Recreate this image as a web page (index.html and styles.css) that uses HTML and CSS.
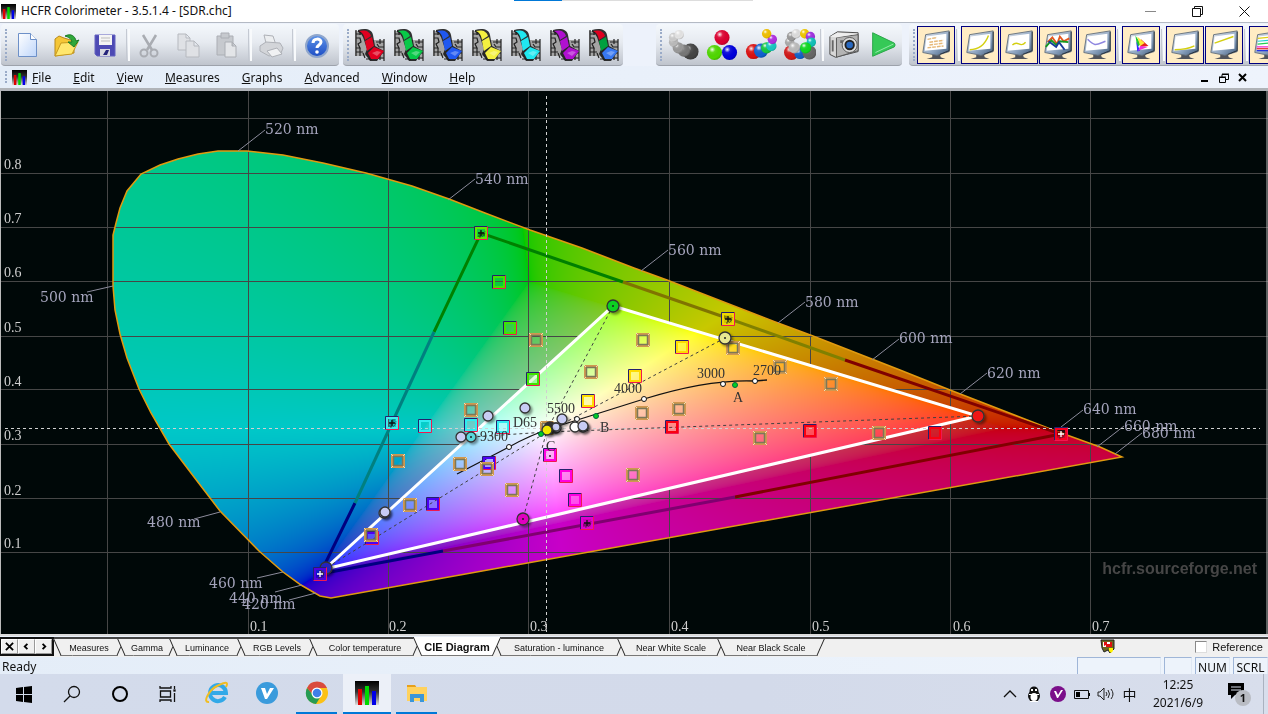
FILE: index.html
```html
<!DOCTYPE html>
<html lang="en">
<head>
<meta charset="utf-8">
<title>HCFR Colorimeter - 3.5.1.4 - [SDR.chc]</title>
<link rel="stylesheet" href="styles.css">
</head>
<body>
<svg class="defs" aria-hidden="true">
  <defs>
    <linearGradient id="logoBg" x2="0" y2="1"><stop stop-color="#000"/><stop offset=".45" stop-color="#333"/><stop offset="1" stop-color="#ddd"/></linearGradient>
    <linearGradient id="paper" x2="1" y2="1"><stop stop-color="#fff"/><stop offset="1" stop-color="#bfd6fa"/></linearGradient>
    <linearGradient id="helpFill" x2="0" y2="1"><stop stop-color="#5f95e8"/><stop offset="1" stop-color="#1c4cc4"/></linearGradient>
    <linearGradient id="frame" x2="1" y2="1"><stop stop-color="#e4e8ee"/><stop offset=".6" stop-color="#8fa6c2"/><stop offset="1" stop-color="#3c5878"/></linearGradient>
    <radialGradient id="shine" cx=".35" cy=".3" r=".8"><stop stop-color="#fff" stop-opacity=".95"/><stop offset=".25" stop-color="#fff" stop-opacity=".1"/><stop offset=".7" stop-color="#000" stop-opacity="0"/><stop offset="1" stop-color="#000" stop-opacity=".25"/></radialGradient>
    <symbol id="logo" viewBox="0 0 24 24"><path fill="url(#logoBg)" d="M0 0h24v24H0z"/><path fill="#e00000" d="M3 8h4v16H3z"/><path fill="#00d800" d="M10 5h4v19h-4z"/><path fill="#0000e8" d="M17 10h4v14h-4z"/></symbol>
    <symbol id="film" viewBox="0 0 32 32">
      <path fill="#a4a4a4" d="M1 2h8l4 9h17v19H18l-7-3H1z"/>
      <path fill="none" stroke="#222" stroke-width="1.2" d="M2 1v26M6 2v4M2 5h5M2 9h4l1 4-3 2 2 4H2M2 23h7M6 19v8M30 10v22M26 10v5M30 13h-8M30 18h-5l-2-3M30 24h-7M30 29h-8M26 25v6M12 30h6M9 24l2 5"/>
      <path d="M4 1c7-2 14-1 15 5l2 11 9 5-7 10h-7l-5-7 2-5-3-9C9 7 7 4 4 3z" fill="#111" fill-opacity=".85"/>
      <path class="fa" d="M5 2c5-1 10-1 12 5l-6 4C10 6 9 4 5 2z"/><path class="fb" d="m11 12 7-4 2 9-7 5z"/><path class="fc" d="m14 24 6-6 10 4-6 8h-7z"/>
      <path d="m18 24 5-2 4 1-4 4z" fill="#fff" opacity=".3"/>
    </symbol>
    <symbol id="monitor" viewBox="0 0 34 34">
      <path fill="#50545c" d="m13 27 8-1 1 4 5 2H7l6-2z"/><path fill="url(#frame)" stroke="#66727e" d="M6 6 31 2v22L18 28 3 25z"/>
      <path fill="#fff" d="M7 8 28 5v16L5 23z"/><path fill="none" stroke="#242e3a" d="M31 3v20l-10 4"/>
    </symbol>
  </defs>
</svg>
<div class="app">
  <header class="titlebar">
    <span class="loading"></span>
    <svg class="applogo"><use href="#logo"/></svg><h1>HCFR Colorimeter - 3.5.1.4 - [SDR.chc]</h1>
    <div class="winbuttons">
      <button aria-label="Minimize"><svg viewBox="0 0 11 11"><path stroke="#888" d="M0 5.500h11"/></svg></button>
      <button aria-label="Restore"><svg viewBox="0 0 11 11"><path d="M.5 2.500h8v8h-8zM2.500 2.500v-2h8v8h-2"/></svg></button>
      <button aria-label="Close"><svg viewBox="0 0 11 11"><path d="m.5.5 10 10m0-10-10 10"/></svg></button>
    </div>
  </header>

  <div class="toolbars">
    <div class="toolbar tb-file">
      <button aria-label="New"><svg viewBox="0 0 32 32"><path fill="url(#paper)" stroke="#6d90c8" d="M6.500 4.500h12l6 6v17h-18z"/><path fill="#fff" stroke="#6d90c8" d="M18.500 4.500v6h6"/></svg></button>
      <button aria-label="Open"><svg viewBox="0 0 32 32"><path fill="#f5c636" stroke="#b8891a" d="M4 27V10l4-3 5 2 10 3v12z"/><path fill="#ffe76e" stroke="#c79a20" d="m4 27 6-13 17-1-6 12z"/><path fill="#2fa83a" stroke="#1b7c28" d="M14 7c6-3 10 0 11 5l3-1-5 7-6-5 4 0c-1-4-4-5-7-6z"/></svg></button>
      <button aria-label="Save"><svg viewBox="0 0 32 32"><path fill="#4d4ab4" stroke="#6462c0" d="M5 6h20v21H7l-2-2z"/><path fill="#f4f4f4" d="M9 6h13v10H9z"/><path stroke="#bbb" d="M11 9h9M11 12h9"/><path fill="#d8d8e0" d="M10 20h10v7H10z"/><path fill="#25237a" d="M16 21h3l-2 5h-4z"/></svg></button>
      <i class="sep"></i>
      <button aria-label="Cut"><svg viewBox="0 0 32 32" fill="none" stroke="#a9acb2" stroke-width="2"><path d="m9 6 9 15M22 6l-9 15" stroke-width="2.500"/><circle cx="10" cy="24" r="3.500"/><circle cx="20" cy="24" r="3.500"/></svg></button>
      <button aria-label="Copy"><svg viewBox="0 0 32 32" fill="#dfe1e5" stroke="#b6b9bf"><path d="M5 5h8l4 4v12H5zM13 5v4h4"/><path d="M13 12h8l5 5v11H13zM21 12v5h5"/></svg></button>
      <button aria-label="Paste"><svg viewBox="0 0 32 32" fill="#c6c9ce" stroke="#abaeb4"><path d="M5 7h16v19H5z"/><path d="M9 4h8v5H9z"/><path fill="#e3e5e8" d="M13 13h7l4 4v11H13zM20 13v4h4"/></svg></button>
      <i class="sep"></i>
      <button aria-label="Print"><svg viewBox="0 0 32 32" fill="#d3d5d9" stroke="#aeb1b7"><path fill="#eceef0" d="m8 6 9 1 3 9-9 2z"/><path d="m4 17 6-4 14 1 3 5-2 5-12 3-9-5z"/><path fill="#f0f1f3" d="m11 22 10-3 5 6-10 3z"/></svg></button>
      <i class="sep"></i>
      <button aria-label="Help"><svg viewBox="0 0 32 32"><circle cx="17" cy="17" r="11" fill="url(#helpFill)" stroke="#8fa6cc" stroke-width="2"/><path fill="none" stroke="#fff" stroke-width="3" d="M13 14c0-5 8-5 8-1 0 3-4 3-4 6"/><circle cx="17" cy="23" r="1.800" fill="#fff"/></svg></button>
    </div>
    <div class="toolbar tb-film">
      <button aria-label="Red measure"><svg class="film red"><use href="#film"/></svg></button>
      <button aria-label="Green measure"><svg class="film green"><use href="#film"/></svg></button>
      <button aria-label="Blue measure"><svg class="film blue"><use href="#film"/></svg></button>
      <button aria-label="Yellow measure"><svg class="film yellow"><use href="#film"/></svg></button>
      <button aria-label="Cyan measure"><svg class="film cyan"><use href="#film"/></svg></button>
      <button aria-label="Magenta measure"><svg class="film magenta"><use href="#film"/></svg></button>
      <button aria-label="Saturation measure"><svg class="film rgb"><use href="#film"/></svg></button>
    </div>
    <div class="toolbar tb-measure">
      <button aria-label="Gray scale"><svg viewBox="0 0 34 34" data-balls="25,24,8.5,#444 18,23,6.500,#777 12,20,6,#999 7,14,5,#bbb 7,9,5,#ccc 13,6,5,#e4e4e4"></svg></button>
      <button aria-label="Primaries"><svg viewBox="0 0 34 34" data-balls="17,9,8,#dc0030 9,25,8,#50d800 25,25,8,#0000dc"></svg></button>
      <button aria-label="Saturation"><svg viewBox="0 0 34 34" data-balls="9,24,8,#dc1010 17,23,7.500,#1060d0 23,20,6,#18c840 28,18,5.500,#18c8c0 29,11,5,#b030e0 23,5,5,#f0c000"></svg></button>
      <button aria-label="Color checker"><svg viewBox="0 0 34 34" data-balls="8,25,8,#d01818 17,26,6,#1060c8 27,25,7.500,#666 6,14,5,#aaa 8,8,5,#999 13,5,5,#ddd 22,5,5,#f0c800 28,8,5,#a030e0 29,14,5,#10c0b8 23,20,6,#10d820 11,20,6,#bbb"></svg></button>
      <i class="sep"></i>
      <button aria-label="Camera"><svg viewBox="0 0 34 34"><path fill="#d7d7d7" stroke="#444" d="m2 8 8-5 22 1v20L8 30l-6-3z"/><path fill="#b4b4b4" stroke="#555" d="M9 9 32 6v17L9 30z"/><path fill="#eee" d="m2 8 8-4 22 1-23 4z"/><circle cx="23" cy="17" r="8" fill="#ddd" stroke="#555"/><circle cx="23" cy="17" r="5.500" fill="#222"/><circle cx="23" cy="17" r="3.500" fill="#2868c0"/><path fill="#666" d="M13 12h3v3h-3zM4 12h2v12H4z"/></svg></button>
      <button aria-label="Start"><svg viewBox="0 0 34 34"><path fill="#35c957" stroke="#28a346" d="m6 4 23 11c1 1 1 3 0 4L6 29z"/><path fill="none" stroke="#9ceab0" d="m9 25 19-9"/></svg></button>
    </div>
    <div class="toolbar tb-views">
      <button class="on" aria-label="Measures"><svg viewBox="0 0 34 34"><use href="#monitor"/><path fill="none" stroke="#e6b878" stroke-width="1.500" stroke-dasharray="4 1" d="m8 11 10-2M10 14l15-2M10 17l15-2M8 20l17-2"/></svg></button>
      <i class="sep"></i>
      <button class="on" aria-label="Luminance"><svg viewBox="0 0 34 34"><use href="#monitor"/><path fill="none" stroke="#d4cf10" stroke-width="1.500" d="M6 22c11 0 17-7 20-15"/></svg></button>
      <button class="on" aria-label="Gamma"><svg viewBox="0 0 34 34"><use href="#monitor"/><path fill="none" stroke="#d4cf10" stroke-width="1.500" d="M10 17c6-6 8 4 14-3"/></svg></button>
      <button class="on" aria-label="RGB levels"><svg viewBox="0 0 34 34"><use href="#monitor"/><g fill="none" stroke-width="2"><path stroke="#e35720" d="m6 14 5-5 5 7 3-8 4 5 6-3"/><path stroke="#169820" d="m4 19 6-7 5 5 4-4 9 1"/><path stroke="#173a9a" d="m7 13 8 6 3-5 6 8"/></g></svg></button>
      <button class="on" aria-label="Color temperature"><svg viewBox="0 0 34 34"><use href="#monitor"/><path fill="none" stroke="#8e86e0" stroke-width="1.500" d="M7 11c8 8 9 6 19 2"/></svg></button>
      <i class="sep"></i>
      <button class="on" aria-label="CIE diagram"><svg viewBox="0 0 34 34"><use href="#monitor"/><path fill="#20c830" d="m11 7 6 9-4 3z"/><path fill="#e82020" d="m17 11 8 7-9 1z"/><path fill="#ffe838" d="m13 8 8 7-5 3z"/><path fill="#3030ff" d="m12 13 4 10-3 1z"/><path fill="#f030e0" d="m16 18 8 1-10 4z"/></svg></button>
      <i class="sep"></i>
      <button class="on" aria-label="Near black"><svg viewBox="0 0 34 34"><use href="#monitor"/><path fill="none" stroke="#d4cf10" stroke-width="1.500" d="M6 22c11 0 17-2 21-4"/></svg></button>
      <button class="on" aria-label="Near white"><svg viewBox="0 0 34 34"><use href="#monitor"/><path fill="none" stroke="#d4cf10" stroke-width="1.500" d="m7 15 20-7"/></svg></button>
      <i class="sep"></i>
      <button class="on" aria-label="Saturation shift"><svg viewBox="0 0 34 34"><use href="#monitor"/><g fill="none" stroke-width="1.300"><path stroke="#e0d010" d="m6 10 22-2"/><path stroke="#20d0d0" d="m6 13 22-2"/><path stroke="#20d050" d="m6 16 22-2"/><path stroke="#f020d0" d="M5 19h22"/><path stroke="#e02020" d="M5 21h22"/><path stroke="#2030e0" d="M5 23h20"/></g></svg></button>
    </div>
  </div>

  <nav class="menubar">
    <svg class="doclogo"><use href="#logo"/></svg>
    <button><u>F</u>ile</button><button><u>E</u>dit</button><button><u>V</u>iew</button><button><u>M</u>easures</button><button><u>G</u>raphs</button><button><u>A</u>dvanced</button><button><u>W</u>indow</button><button><u>H</u>elp</button>
    <div class="docbuttons">
      <button aria-label="Minimize document"><svg viewBox="0 0 10 10"><path stroke-width="2" d="M1 8h7"/></svg></button>
      <button aria-label="Restore document"><svg viewBox="0 0 10 10"><path d="M0 4.500h6.500v5H.5v-5M3 4V1.500h6.500v5H7M3 1h7M0 4h7"/></svg></button>
      <button aria-label="Close document"><svg viewBox="0 0 10 10"><path stroke-width="2" d="m1 1 7 7m0-7L1 8"/></svg></button>
    </div>
  </nav>

  <main class="chart">
    <canvas id="gamut" width="1268" height="543"></canvas>
    <svg id="plot" viewBox="0 91 1268 543" preserveAspectRatio="none" role="img" aria-label="CIE diagram">
      <defs>
        <mask id="outside"><path fill="#fff" d="M0 91h1268v543H0z"/><path fill="#000" d="m613 306 365 110-653 153z"/></mask>
        <filter id="drop" x="-50%" y="-50%" width="200%" height="200%"><feDropShadow dx="2" dy="2" stdDeviation="1" flood-opacity=".4"/></filter>
      </defs>
      <path class="grid" mask="url(#outside)" d="M107.500 91v543M248.500 91v543M388.500 91v543M528.500 91v543M669.500 91v543M810.500 91v543M950.500 91v543M1090.500 91v543M0 118.500h1268M0 173.500h1268M0 227.500h1268M0 281.500h1268M0 336.500h1268M0 389.500h1268M0 444.500h1268M0 498.500h1268M0 552.500h1268"/>
      <polygon id="locus" class="locus" points="331,598 320,596 301,585 283,572 259,551 220,511 194,477 169,444 151,413 139,389 127,358 120,334 115,310 113,286 113,265 113,235 116,223 120,208 127,191 141,174 160,165 178,159 198,154 218,151 247,151 283,155 323,163 366,173 412,186 449,199 485,213 530,230 582,248 634,268 667,280 778,323 813,336 900,370 950,390 1053,430 1100,447 1122,457"/>
      <g class="leader"><path d="m238 151 27-21M448 200l27-21M641 271l27-21M778 323l27-21M872 360l27-21M960 394l27-21M1061 427l22-17M1097 447l27-21M1115 454l27-21M113 286l-26 6M220 512l-26 7M283 572l-26 6M302 585l-27 7M316 593l-27 7"/></g>
      <g class="wave"><text x="265" y="134">520 nm</text><text x="475" y="184">540 nm</text><text x="668" y="255">560 nm</text><text x="805" y="307">580 nm</text><text x="899" y="343">600 nm</text><text x="987" y="378">620 nm</text><text x="1083" y="414">640 nm</text><text x="1124" y="431">660 nm</text><text x="1142" y="438">680 nm</text><text x="40" y="302">500 nm</text><text x="147" y="527">480 nm</text><text x="209" y="588">460 nm</text><text x="229" y="603">440 nm</text><text x="242" y="609">420 nm</text></g>
      <g class="axis"><text x="4" y="169">0.8</text><text x="4" y="223">0.7</text><text x="4" y="277">0.6</text><text x="4" y="332">0.5</text><text x="4" y="386">0.4</text><text x="4" y="440">0.3</text><text x="4" y="495">0.2</text><text x="4" y="548">0.1</text><text x="250" y="631">0.1</text><text x="389" y="631">0.2</text><text x="530" y="631">0.3</text><text x="671" y="631">0.4</text><text x="812" y="631">0.5</text><text x="953" y="631">0.6</text><text x="1092" y="631">0.7</text></g>
      <text class="mark" x="1257" y="574" text-anchor="end">hcfr.sourceforge.net</text>
      <g class="ref"><path stroke="#008000" d="m434 332 47-99 142 49"/><path stroke="#807400" d="m623 282 104 36"/><path stroke="#808000" d="m727 318 118 42"/><path stroke="#800000" d="m845 360 216 74-326 63"/><path stroke="#800070" d="m735 497-292 54"/><path stroke="#000080" d="m443 551-123 23 35-71"/><path stroke="#008080" d="m355 503 79-171"/></g>
      <path class="gamutline" d="m613 306 365 110-653 153z"/>
      <path class="cross" d="M546.500 96v536M5 428.500h1255"/>
      <path class="links" d="m613 306-66 124-24 89M725 338 547 432 326 568M978 416l-431 16-76 5"/>
      <path class="planck" d="M457 474 509 447Q530 435 555 427T644 399T755 381L767 380"/>
      <g id="markers"></g>
      <g class="temps"><text x="513" y="427">D65</text><text x="480" y="441">9300</text><text x="547" y="413">5500</text><text x="614" y="393">4000</text><text x="697" y="378">3000</text><text x="753" y="375">2700</text><text x="733" y="402">A</text><text x="600" y="432">B</text><text x="546" y="451">C</text></g>
      <path class="edge" d="M.5 91v543M1267 91v543"/>
    </svg>
  </main>

  <div class="tabrow">
    <div class="tabnav">
      <button aria-label="Close view"><svg viewBox="0 0 10 10"><path d="m1 1 8 8m0-8L1 9"/></svg></button>
      <button aria-label="Previous"><svg viewBox="0 0 10 10"><path d="M6 2 3 5l3 3"/></svg></button>
      <button aria-label="Next"><svg viewBox="0 0 10 10"><path d="m4 2 3 3-3 3"/></svg></button>
    </div>
    <div class="tabs" role="tablist">
      <button role="tab" class="w64"><span>Measures</span></button><button role="tab" class="w52"><span>Gamma</span></button><button role="tab" class="w68"><span>Luminance</span></button><button role="tab" class="w72"><span>RGB Levels</span></button><button role="tab" class="w104"><span>Color temperature</span></button><button role="tab" class="w80 active" aria-selected="true"><span>CIE Diagram</span></button><button role="tab" class="w124"><span>Saturation - luminance</span></button><button role="tab" class="w100"><span>Near White Scale</span></button><button role="tab" class="w100"><span>Near Black Scale</span></button>
    </div>
    <svg class="sensor" viewBox="0 0 15 15"><path fill="#6d6820" stroke="#222" d="M1 1h13v9l-4 4-2-3-4 2-2-4z"/><path fill="#fff" d="M3 3h8v5H3z"/><path fill="#e01010" d="M4 3h3v2h3V3h2v5H6V6L4 7z"/><path fill="#fff200" d="M9 9h4v3l-2 2-2-2z"/></svg>
    <label class="reference"><input type="checkbox">Reference</label>
  </div>

  <footer class="status"><span class="ready">Ready</span><span class="pane p84"></span><span class="pane p28"></span><span class="pane p35">NUM</span><span class="pane p35">SCRL</span></footer>

  <div class="taskbar">
    <div class="sys">
      <button aria-label="Start menu"><svg viewBox="0 0 24 24"><path d="m4 6 7-1v7H4zM12 5l8-1v8h-8zM4 13h7v7l-7-1zM12 13h8v8l-8-1z"/></svg></button>
      <button aria-label="Search"><svg viewBox="0 0 24 24" fill="none" stroke="#111" stroke-width="1.300"><circle cx="14" cy="10" r="5.500"/><path d="m10 14-6 6"/></svg></button>
      <button aria-label="Cortana"><svg viewBox="0 0 24 24"><circle cx="12" cy="12" r="7" fill="none" stroke="#000" stroke-width="2"/></svg></button>
      <button aria-label="Task view"><svg viewBox="0 0 24 24" fill="none" stroke="#111" stroke-width="1.300"><path d="M4 4v2h11V4M4.500 9h10v6h-10zM4 20v-2h11v2M18.500 4v3m0 4v9"/><path fill="#111" d="M18 8h1v1h-1z"/></svg></button>
    </div>
    <div class="apps">
      <button aria-label="Internet Explorer"><svg viewBox="0 0 24 24"><path fill="none" stroke="#32a9e8" stroke-width="4" d="M20 16a8 8 0 1 1 1-4H7"/><path fill="none" stroke="#f0bd22" stroke-width="2" d="M4 21C-3 22 4 9 12 5s12-5 9 1"/></svg></button>
      <button aria-label="Vivaldi mail"><svg viewBox="0 0 24 24"><circle cx="12" cy="12" r="11" fill="#3a9bdc"/><path fill="#fff" d="M6 7h4l2 6 3-6h4l-7 11h-2z"/></svg></button>
      <button class="open" aria-label="Chrome"><svg viewBox="0 0 24 24"><circle cx="12" cy="12" r="11" fill="#fbc116"/><path fill="#d94a3d" d="M2 7a11 11 0 0 1 20 0H12a5 5 0 0 0-4 7z"/><path fill="#269b54" d="M2 7a11 11 0 0 0 9 16l5-8a5 5 0 0 1-8-1z"/><circle cx="12" cy="12" r="5.500" fill="#fff"/><circle cx="12" cy="12" r="4.300" fill="#3f7fe8"/></svg></button>
      <button class="open current" aria-label="HCFR"><svg><use href="#logo"/></svg></button>
      <button class="open" aria-label="File Explorer"><svg viewBox="0 0 24 24"><path fill="#e7a01b" d="M2 4h8l2 3H2z"/><path fill="#ffd25e" d="M2 6h20v14H2z"/><path fill="#3b96d8" d="M5 21v-8h14v8h-4v-4H9v4z"/></svg></button>
    </div>
    <div class="tray">
      <svg viewBox="0 0 24 24" fill="none" stroke="#111" stroke-width="1.300"><path d="m6 15 6-6 6 6"/></svg>
      <svg viewBox="0 0 24 24"><ellipse cx="12" cy="14" rx="6" ry="6" fill="#111"/><circle cx="12" cy="9" r="4.500" fill="#111"/><ellipse cx="12" cy="15" rx="3.500" ry="4" fill="#fff"/><path fill="#fff" d="M9 7h2v2H9zm4 0h2v2h-2zM8 19h8v1H8zM7 12h10v1H7z"/></svg>
      <svg viewBox="0 0 24 24"><circle cx="12" cy="12" r="8" fill="#7b0f8a"/><path fill="#fff" d="M8 9h2l2 4 3-5h2l-5 8h-1z"/></svg>
      <svg viewBox="0 0 24 24"><path fill="none" stroke="#111" d="M4.500 8.500h14v8h-14z"/><path d="M6 10h4v5H6zM19 11h1v3h-1z"/></svg>
      <svg viewBox="0 0 24 24" fill="none" stroke="#222"><path d="M4 10h2l4-4v12l-4-4H4zM12 10q2 2 0 4M14 8q3 4 0 8M17 7q4 5 0 10"/></svg>
      <span class="ime">中</span>
    </div>
    <time class="clock"><span>12:25</span><span>2021/6/9</span></time>
    <button class="notice" aria-label="Notifications"><svg viewBox="0 0 26 26"><path d="M2 2h16v12H9l-4 4v-4H2z"/><path stroke="#d5dcea" d="M5 6h10M5 9h10"/><circle cx="17" cy="17" r="8" fill="#b9bcc3"/></svg><b>1</b></button>
    <span class="desktop"></span>
  </div>
</div>
<script src="diagram.js"></script>
</body>
</html>
```

FILE: styles.css
```css
* { box-sizing: border-box; }
html, body { height: 100%; }
body { margin: 0; overflow: hidden; font-family: "Open Sans", "Noto Sans", sans-serif; color: #111; background: #e9f0fa; }
button { border: 0; background: none; padding: 0; margin: 0; font: inherit; color: inherit; display: flex; align-items: center; justify-content: center; }
svg { display: block; }
.defs { position: absolute; width: 0; height: 0; }
.app { display: flex; flex-direction: column; height: 100vh; }

.titlebar { position: relative; flex: none; height: 23px; display: flex; align-items: center; background: #fff; padding-left: 1px; border-bottom: 1px solid #b4bac4; }
.titlebar h1 { margin: 0 0 0 5px; font-family: "Noto Sans", sans-serif; font-size: 12px; line-height: 20px; font-weight: 400; flex: 1; }
.applogo { width: 15px; height: 15px; }
.loading { position: absolute; top: 0; left: 514px; width: 239px; height: 1px; background: linear-gradient(90deg, #0078d7 48px, #ddd 48px); }
.winbuttons { display: flex; }
.winbuttons button { width: 47px; height: 22px; }
.winbuttons svg { width: 11px; height: 11px; fill: none; stroke: #111; }

.toolbars { flex: none; display: flex; height: 43px; padding-top: 1px; background: #edf2fb; overflow: hidden; }
.toolbar { flex: none; display: flex; gap: 1px; align-items: center; height: 42px; position: relative; border-radius: 4px; border-bottom: 1px solid #9da2ab; background: linear-gradient(#f4f8fc, #e6eaf0 45%, #bfc4cd); }
.toolbar::before { content: ""; position: absolute; left: 4px; top: 5px; height: 32px; border-left: 2px dotted #9aabc8; }
.toolbar button { width: 38px; height: 38px; flex: none; }
.toolbar svg { width: 32px; height: 32px; }
.tb-file { margin-left: 1px; padding: 0 4px 0 8px; }
.tb-film { margin-left: 4px; padding-left: 8px; }
.tb-measure { margin-left: 33px; padding-left: 8px; }
.tb-views { margin-left: 7px; padding-left: 8px; }
.sep { width: 4px; height: 32px; border-left: 1px solid #c4c9d2; border-right: 2px solid #f8fafc; flex: none; }
.toolbar .on { background: #ffecc4; border: 1px solid #000080; }
.fa { fill: var(--a); } .fb { fill: var(--b, var(--a)); } .fc { fill: var(--c, var(--a)); }
.red { --a: #e00020; } .green { --a: #08c848; } .blue { --a: #2058f0; } .yellow { --a: #f4f040; }
.cyan { --a: #20e8f0; } .magenta { --a: #b010d0; } .rgb { --a: #e00020; --b: #00a040; --c: #3878f0; }

.menubar { flex: none; display: flex; align-items: center; height: 25px; padding: 1px 20px 0 12px; background: linear-gradient(90deg, #e4edf8, #eef3fc); border-bottom: 3px solid #b0b3b8; font-family: "Noto Sans", sans-serif; font-size: 12px; position: relative; }
.menubar::before { content: ""; position: absolute; left: 5px; top: 5px; height: 12px; border-left: 2px dotted #9aabc8; }
.doclogo { width: 15px; height: 15px; margin-right: 5px; }
.menubar > button { margin-right: 22px; line-height: 18px; white-space: pre; }
.docbuttons { margin-left: auto; display: flex; gap: 9px; }
.docbuttons svg { width: 10px; height: 10px; fill: none; stroke: #000; }

.chart { flex: 1; min-height: 0; display: grid; background: #000808; overflow: hidden; }
.chart > * { grid-area: 1 / 1; width: 100%; height: 100%; min-height: 0; }
.edge { stroke: #bbb; }
.grid { stroke: #464646; fill: none; stroke-width: 1; }
.locus { fill: none; stroke: #e09a10; stroke-width: 1.5; }
.leader { fill: none; stroke: #8c8c9c; }
.wave { font-family: "DejaVu Serif", serif; font-size: 14px; fill: #a4a4bc; }
.axis { font-family: "Liberation Serif", serif; font-size: 14px; fill: #d0d0d0; }
.mark { font-family: "Liberation Sans", sans-serif; font-size: 16px; font-weight: 700; fill: #464646; }
.ref { fill: none; stroke-width: 3; }
.gamutline { fill: none; stroke: #fff; stroke-width: 3; }
.cross { stroke: #d0d0d0; stroke-dasharray: 3 3; fill: none; }
.links { stroke: #404040; stroke-dasharray: 3 3; fill: none; }
.planck { stroke: #111; stroke-width: 1.3; fill: none; }
.temps { font-family: "Liberation Serif", serif; font-size: 14px; fill: #333; }

.tabrow { flex: none; display: flex; align-items: stretch; height: 23px; background: linear-gradient(#444 2px, #f0f0f0 2px) 0 1px no-repeat; border-top: 2px solid #dcdcdc; font-family: "Liberation Sans", sans-serif; font-size: 9px; }
.tabnav { display: flex; border: 1px solid #111; border-width: 2px 2px 2px 1px; height: 19px; margin-top: 1px; }
.tabnav button { width: 17px; border: 1px solid #999; border-top-color: #fff; border-left-color: #fff; }
.tabnav svg { width: 9px; height: 9px; fill: none; stroke: #000; stroke-width: 2; }
.tabs { display: flex; flex: 1; padding-left: 3px; margin-top: 3px; height: 17px; }
.tabs button { position: relative; z-index: 0; }
.tabs button span { position: relative; z-index: 1; white-space: nowrap; }
.tabs button::before, .tabs button::after { content: ""; position: absolute; top: 0; bottom: 0; border-bottom: 1px solid #777; background: #f0f0f0; }
.tabs button::before { left: 0; right: 30%; border-left: 1px solid #222; transform: skewX(24deg); }
.tabs button::after { right: 0; left: 30%; border-right: 1px solid #222; transform: skewX(-24deg); }
.tabs .active { font-weight: 700; font-size: 11px; z-index: 2; margin-top: -2px; }
.tabs .active::before, .tabs .active::after { background: #fff; }
.w64 { width: 64px; } .w52 { width: 52px; } .w68 { width: 68px; } .w72 { width: 72px; } .w104 { width: 104px; }
.w80 { width: 80px; } .w124 { width: 124px; } .w100 { width: 100px; }
.sensor { width: 15px; height: 15px; margin: 3px 80px 0 0; }
.reference { display: flex; align-items: center; gap: 5px; font-size: 11px; padding-right: 5px; }
.reference input { appearance: none; margin: 0; width: 12px; height: 12px; background: #fff; border: 1px solid #888; border-right-color: #ddd; border-bottom-color: #ddd; }

.status { flex: none; display: flex; gap: 3px; height: 17px; font-family: "Noto Sans", sans-serif; font-size: 12px; line-height: 20px; background: linear-gradient(90deg, #e4edf8, #eef4fc); padding-left: 2px; }
.ready { flex: 1; }
.pane { border: 1px solid #9fb6d8; border-bottom: 0; border-right-color: #dfe8f4; background: #edf3fb; text-align: center; white-space: nowrap; }
.p84 { width: 84px; } .p28 { width: 28px; } .p35 { width: 35px; }

.taskbar { flex: none; display: flex; height: 40px; background: linear-gradient(90deg, #d3dbeb, #d3daea 60%, #d8deec); }
.sys, .apps { display: flex; }
.sys button { width: 48px; }
.sys svg { width: 24px; height: 24px; }
.apps button { width: 50px; border-bottom: 3px solid transparent; position: relative; }
.apps svg { width: 24px; height: 24px; }
.apps .open::after { content: ""; position: absolute; left: 4px; right: 5px; bottom: -3px; height: 2px; background: #0078d7; }
.apps .current { background: #ecf0f8; width: 48px; margin: 0 1px; }
.apps .current::after { left: 0; right: 0; }
.tray { margin-left: auto; display: flex; align-items: center; }
.tray svg { width: 24px; height: 24px; }
.ime { width: 23px; text-align: center; font: 14px "Noto Sans CJK SC", sans-serif; }
.clock { width: 74px; display: flex; flex-direction: column; justify-content: center; text-align: center; font-family: "Noto Sans", sans-serif; font-size: 12px; line-height: 18px; }
.notice { position: relative; width: 48px; }
.notice svg { width: 26px; height: 26px; }
.notice b { position: absolute; left: 23px; top: 18px; width: 10px; font-size: 11px; line-height: 12px; }
.desktop { width: 5px; border-left: 1px solid #aab2c0; }
```

FILE: diagram.js
```js
const NS = 'http://www.w3.org/2000/svg';
function add(parent, tag, attrs) {
  const node = document.createElementNS(NS, tag);
  for (const key in attrs) node.setAttribute(key, attrs[key]);
  parent.appendChild(node);
  return node;
}

// Glossy spheres of the measure toolbar: "cx,cy,r,colour" entries
document.querySelectorAll('[data-balls]').forEach(svg => {
  svg.dataset.balls.split(' ').forEach(item => {
    const [cx, cy, r, fill] = item.split(',');
    add(svg, 'circle', { cx, cy, r, fill });
    add(svg, 'circle', { cx, cy, r, fill: 'url(#shine)' });
  });
});

// Chromaticity colours; measured gamut is drawn at full brightness
const canvas = document.getElementById('gamut');
const ctx = canvas.getContext('2d');
const TOP = 91;
function paint(points, level) {
  const layer = document.createElement('canvas');
  layer.width = canvas.width;
  layer.height = canvas.height;
  const lctx = layer.getContext('2d');
  const img = lctx.createImageData(layer.width, layer.height);
  for (let py = 0; py < layer.height; py++) {
    const y = Math.max((606.3 - py - TOP) / 542, 0.001);
    for (let px = 0; px < layer.width; px++) {
      const x = (px - 107.5) / 1404;
      const X = x / y, Z = (1 - x - y) / y;
      const rgb = [
        3.2406 * X - 1.5372 - 0.4986 * Z,
        -0.9689 * X + 1.8758 + 0.0415 * Z,
        0.0557 * X - 0.204 + 1.057 * Z
      ];
      // Out-of-gamut colours are desaturated towards white until they fit
      const low = Math.min(...rgb, 0);
      const max = Math.max(...rgb) - low || 1;
      const i = (py * layer.width + px) * 4;
      for (let k = 0; k < 3; k++) img.data[i + k] = level * Math.pow((rgb[k] - low) / max, 1 / 2.2);
      img.data[i + 3] = 255;
    }
  }
  lctx.putImageData(img, 0, 0);
  ctx.save();
  ctx.beginPath();
  points.forEach(p => ctx.lineTo(p[0], p[1] - TOP));
  ctx.clip();
  ctx.drawImage(layer, 0, 0);
  ctx.restore();
}
const locus = document.getElementById('locus').getAttribute('points').split(' ').map(p => p.split(',').map(Number));
paint(locus, 200);
paint([[613, 306], [978, 416], [325, 569]], 255);

const markers = document.getElementById('markers');
function checker(x, y) {
  add(markers, 'path', { d: `M${x - 6} ${y - 6}h12v12h-12z`, fill: 'none', stroke: '#cf9850', 'stroke-width': 2 });
  add(markers, 'path', { d: `M${x - 4.5} ${y - 4.5}h9v9h-9z`, fill: 'none', stroke: '#7c7858', 'stroke-width': 1.5 });
  add(markers, 'path', { d: `M${x - 7} ${y - 7}l2 2m10 0l2-2m0 14l-2-2m-10 0l-2 2`, fill: 'none', stroke: '#f2dcb4', 'stroke-width': 1 });
}
function target(x, y, color, primary, dark) {
  add(markers, 'path', { d: `M${x - 6.5} ${y + 6.5}v-13h13`, fill: 'none', stroke: '#24206c' });
  add(markers, 'path', { d: `M${x - 6.5} ${y + 6.5}h13v-13`, fill: 'none', stroke: '#f01850' });
  add(markers, 'path', { d: `M${x - 5} ${y - 5}h10v10h-10z`, fill: color, 'fill-opacity': 0.15, stroke: color, 'stroke-width': 2 });
  if (primary) {
    add(markers, 'path', { d: `M${x - 3} ${y}h6m-3-3v6`, stroke: dark ? '#fff' : '#111', 'stroke-width': 1.3 });
    add(markers, 'path', { d: `M${x - 2} ${y + 4}q6 0 6-6`, fill: 'none', stroke: '#333', 'stroke-dasharray': '2 1' });
  }
}
function point(x, y, fill, r = 5) {
  add(markers, 'circle', { cx: x, cy: y, r, fill, stroke: '#333', 'stroke-width': 1.3, filter: 'url(#drop)' });
}

[[489, 463], [433, 504], [372, 538]].forEach(p => target(...p, '#4c00f4'));
[[536, 340], [591, 372], [643, 340], [733, 348], [780, 367], [831, 384], [471, 410], [642, 413], [679, 409], [760, 438], [879, 433], [633, 475], [398, 461], [460, 464], [487, 469], [410, 505], [512, 490], [371, 535], [547, 428]].forEach(p => checker(...p));
[[499, 282], [510, 328], [533, 379]].forEach(p => target(...p, '#40e400'));
[[682, 347], [635, 376], [588, 401]].forEach(p => target(...p, '#ffdc00'));
[[672, 427], [810, 431], [935, 433]].forEach(p => target(...p, '#f80010'));
[[425, 426], [471, 425], [503, 427]].forEach(p => target(...p, '#30ecf0'));
[[550, 455], [566, 476], [575, 500]].forEach(p => target(...p, '#ff00e0'));
point(326, 568, '#2424c0', 6);
target(481, 233, '#60e800', true);
target(728, 319, '#f0d800', true);
target(1061, 434, '#f80020', true, true);
target(392, 423, '#40ecec', true);
target(587, 523, '#e000d0', true);
target(320, 574, '#5000dc', true, true);

[[384, 513], [385, 512], [461, 437], [488, 416], [525, 408], [583, 427], [556, 428], [562, 419]].forEach(p => point(...p, '#c8ccf4'));
point(471, 437, '#58d8dc');
point(575, 427, '#fff');
point(583, 426, '#c8ccf4');
point(550, 428, '#333', 6);
point(556, 427, '#c8ccf4', 4);
point(547, 430, '#f0e800');
point(613, 306, '#08d020', 6);
point(725, 338, '#e8e890', 6);
point(978, 416, '#f01818', 6);
point(523, 519, '#e000c0', 6);
[[509, 447], [577, 419], [644, 399], [723, 384], [755, 381]].forEach(([cx, cy]) => add(markers, 'circle', { cx, cy, r: 2.5, fill: '#fff', stroke: '#111' }));
[[735, 385], [596, 416], [541, 434]].forEach(([cx, cy]) => add(markers, 'circle', { cx, cy, r: 2.5, fill: '#00d020', stroke: '#064' }));
[[613, 306], [725, 338], [523, 519], [471, 437], [550, 456]].forEach(([cx, cy]) => add(markers, 'circle', { cx, cy, r: 1, fill: '#222' }));
```
